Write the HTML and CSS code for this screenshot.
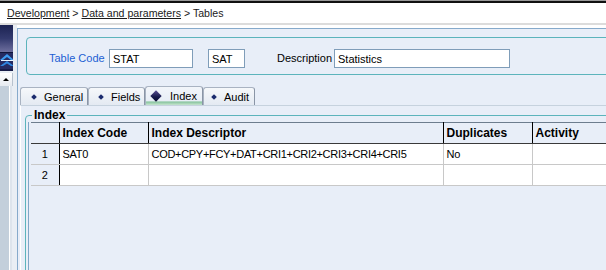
FILE: index.html
```html
<!DOCTYPE html>
<html lang="en">
<head>
    <meta charset="UTF-8">
    <title>Tables</title>
    <link rel="stylesheet" href="styles.css">
</head>
<body>
    <div class="crumb">
        <a href="#">Development</a> &gt; <a href="#">Data and parameters</a> &gt; Tables
    </div>

    <div class="workspace">
        <div class="sidebar">
            <div class="nav-head"></div>
            <div class="nav-icon">
                <svg width="14" height="12" viewBox="0 0 14 12">
                    <polygon points="0,6 7,0 14,6 11,6 7,3 3,6" fill="#3d9cf2"/>
                    <rect x="1" y="6" width="12" height="1" fill="#e8f4ff"/>
                    <polygon points="0,12 7,7 14,12 11,12 7,9.5 3,12" fill="#2f86e0"/>
                </svg>
            </div>
            <div class="nav-up"><span class="arrow-up"></span></div>
            <div class="nav-list"></div>
        </div>

        <div class="main">
            <div class="key-box">
                <label class="key-label">Table Code</label>
                <input type="text" class="in-code" value="STAT">
                <input type="text" class="in-abbr" value="SAT">
                <label class="desc-label">Description</label>
                <input type="text" class="in-desc" value="Statistics">
            </div>

            <div class="tabs">
                <div class="tab tab-general"><span class="dot"></span>General</div>
                <div class="tab tab-fields"><span class="dot"></span>Fields</div>
                <div class="tab tab-index active"><span class="big-dot"></span>Index</div>
                <div class="tab tab-audit"><span class="dot"></span>Audit</div>
            </div>

            <div class="tab-panel">
                <fieldset class="group">
                    <legend>Index</legend>
                    <div class="grid">
                        <table>
                            <colgroup>
                                <col class="c-num">
                                <col class="c-code">
                                <col class="c-desc">
                                <col class="c-dup">
                                <col class="c-act">
                            </colgroup>
                            <thead>
                                <tr>
                                    <th class="num"></th>
                                    <th>Index Code</th>
                                    <th>Index Descriptor</th>
                                    <th>Duplicates</th>
                                    <th>Activity</th>
                                </tr>
                            </thead>
                            <tbody>
                                <tr>
                                    <td class="num">1</td>
                                    <td>SAT0</td>
                                    <td>COD+CPY+FCY+DAT+CRI1+CRI2+CRI3+CRI4+CRI5</td>
                                    <td>No</td>
                                    <td></td>
                                </tr>
                                <tr>
                                    <td class="num">2</td>
                                    <td></td>
                                    <td></td>
                                    <td></td>
                                    <td></td>
                                </tr>
                            </tbody>
                        </table>
                    </div>
                </fieldset>
            </div>
        </div>
    </div>
</body>
</html>
```

FILE: styles.css
```css
body {
    margin: 0;
    width: 606px;
    height: 270px;
    overflow: hidden;
    font-family: "Liberation Sans", Arial, sans-serif;
    font-size: 11px;
    color: #000;
    background: #fff;
}

/* breadcrumb bar */
.crumb {
    height: 20px;
    padding: 3px 0 0 7px;
    line-height: 20px;
    font-size: 10.6px;
    color: #1a1a1a;
    background: linear-gradient(#9a9a9a 0 1px, #111 1px 3px, #fff 3px);
    border-bottom: 2px solid #dcdcdc;
}
.crumb a {
    color: #1a1a1a;
}

.workspace {
    display: flex;
    height: 245px;
}

/* left navigation strip */
.sidebar {
    width: 17px;
    display: flex;
    flex-direction: column;
    background: #e9eef4;
}
.nav-head {
    width: 13px;
    height: 27px;
    background: linear-gradient(#1c2352, #333a6e 50%, #6e6f9e);
    border-bottom: 1px solid #10153a;
}
.nav-icon {
    width: 13px;
    height: 15px;
    padding-top: 1px;
    background: #262c62;
    border-bottom: 2px solid #181d48;
    overflow: hidden;
}
.nav-icon svg {
    display: block;
}
.nav-up {
    width: 12px;
    height: 13px;
    margin-top: 2px;
    background: linear-gradient(#fff, #e6eaf0);
    border-right: 1px solid #b8c2ce;
    position: relative;
}
.arrow-up {
    position: absolute;
    left: 3px;
    top: 5px;
    border-left: 3px solid transparent;
    border-right: 3px solid transparent;
    border-bottom: 3px solid #000;
}
.nav-list {
    flex: 1;
    width: 9px;
    background: #c3cfdb;
    border-right: 1px solid #fff;
    box-shadow: 2px 0 0 #dde4ec;
}

/* main area */
.main {
    flex: 1;
    margin-top: 3px;
    border-top: 1px solid #86aacb;
    border-left: 1px solid #86aacb;
    background: #e8eef8;
    overflow: hidden;
}

.key-box {
    display: flex;
    align-items: center;
    width: 640px;
    margin: 8px 0 0 8px;
    padding: 11px 0 6px 22px;
    border: 1px solid #5cb4bc;
    border-radius: 4px;
}
.key-box label {
    height: 19px;
    line-height: 19px;
}
.key-label {
    width: 60px;
    color: #1d5fd4;
}
.desc-label {
    width: 57px;
    margin-left: 32px;
}
.key-box input {
    box-sizing: border-box;
    height: 19px;
    padding: 0 3px;
    border: 1px solid #7f9db9;
    background: #fff;
    font-family: "Liberation Sans", Arial, sans-serif;
    font-size: 11px;
    color: #000;
    outline: none;
}
.in-code {
    width: 84px;
}
.in-abbr {
    width: 37px;
    margin-left: 15px;
}
.in-desc {
    width: 176px;
}

/* tabs */
.tabs {
    display: flex;
    align-items: flex-end;
    height: 19px;
    margin: 11px 0 0 2px;
}
.tab {
    box-sizing: border-box;
    display: flex;
    align-items: center;
    height: 18px;
    padding-left: 10px;
    border: 1px solid #a9b3c2;
    border-bottom: none;
    border-right-color: #8a95a6;
    border-radius: 3px 3px 0 0;
    background: linear-gradient(#f6f8fb, #e4eaf2);
}
.tab-general {
    width: 68px;
    padding-left: 11px;
}
.tab-fields {
    width: 57px;
}
.tab-index {
    width: 58px;
}
.tab-audit {
    width: 52px;
    padding-left: 8px;
}
.tab.active {
    height: 19px;
    padding-left: 4px;
    background: linear-gradient(#f2f5fa, #e8eef6 75%, #8cc6a2 84%, #c6e4cf);
}
.dot {
    width: 4px;
    height: 4px;
    margin-right: 8px;
    background: #1b2b6e;
    transform: rotate(45deg);
}
.big-dot {
    width: 8px;
    height: 8px;
    margin: 0 10px 0 2px;
    background: linear-gradient(135deg, #5a4e92, #15184a 60%, #0a0c30);
    transform: rotate(45deg);
}

/* tab page */
.tab-panel {
    height: 200px;
    margin-left: 2px;
    border-top: 1px solid #c6d2de;
    border-left: 1px solid #fff;
}
.group {
    width: 640px;
    height: 200px;
    margin: 2px 0 0 4px;
    padding: 0 2px;
    border: 1px solid #5cb4bc;
    border-radius: 4px 0 0 0;
}
.group legend {
    margin-left: 4px;
    padding: 0 2px;
    font-size: 12px;
    font-weight: bold;
    line-height: 14px;
}
.grid {
    height: 180px;
    padding-left: 2px;
    border-left: 1px solid #7fa6c8;
}

table {
    border-collapse: collapse;
    table-layout: fixed;
    width: 612px;
}
.c-num { width: 28px; }
.c-code { width: 89px; }
.c-desc { width: 295px; }
.c-dup { width: 89px; }
.c-act { width: 111px; }

th {
    height: 20px;
    padding: 0 3px;
    text-align: left;
    font-size: 12px;
    font-weight: bold;
    background: #e8eef8;
    border-top: 1px solid #6d7d8e;
    border-bottom: 1px solid #3a3a3a;
    border-right: 1px solid #000;
    white-space: nowrap;
    overflow: hidden;
}
td {
    height: 20px;
    padding: 0 3px;
    background: #fff;
    letter-spacing: -0.3px;
    border-right: 1px solid #c8c8c8;
    border-bottom: 1px solid #c8c8c8;
    white-space: nowrap;
    overflow: hidden;
}
td.num {
    text-align: center;
    background: #e8eef8;
    border-right: 1px solid #000;
}
```
